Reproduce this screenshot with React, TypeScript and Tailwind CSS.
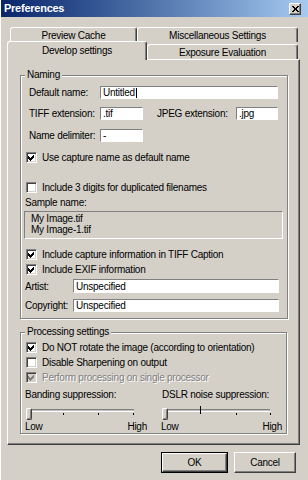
import React from "react";

const raised =
  "border border-t-white border-l-white border-r-[#404040] border-b-[#404040] shadow-[inset_-1px_-1px_0_#808080]";

function Check({ checked, disabled }: { checked?: boolean; disabled?: boolean }) {
  return (
    <span
      className={`w-[11px] h-[11px] shrink-0 flex items-center justify-center border border-t-[#808080] border-l-[#808080] border-b-white border-r-white shadow-[inset_1px_1px_0_#404040,inset_-1px_-1px_0_#d4d0c8] ${
        disabled ? "bg-[#d4d0c8]" : "bg-white"
      }`}
    >
      {checked && (
        <svg width="7" height="7" viewBox="0 0 7 7" shapeRendering="crispEdges">
          <path d="M0 2 L2 4 L6 0 L6 3 L2 7 L0 5 Z" fill={disabled ? "#808080" : "#000"} />
        </svg>
      )}
    </span>
  );
}

function CheckRow({
  label,
  checked,
  disabled,
  className = "",
}: {
  label: string;
  checked?: boolean;
  disabled?: boolean;
  className?: string;
}) {
  return (
    <div className={`flex items-center h-[11px] pl-[1px] ${className}`}>
      <Check checked={checked} disabled={disabled} />
      <span
        className={`ml-[5px] leading-[11px] whitespace-nowrap ${
          disabled ? "text-[#808080] [text-shadow:1px_1px_0_#fff]" : ""
        }`}
      >
        {label}
      </span>
    </div>
  );
}

function Input({
  value,
  className = "",
  caret,
}: {
  value: string;
  className?: string;
  caret?: boolean;
}) {
  return (
    <div
      className={`bg-white border border-t-[#808080] border-l-[#808080] border-b-white border-r-white flex items-center pl-[2px] leading-[11px] whitespace-nowrap ${className}`}
    >
      {value}
      {caret && <span className="inline-block w-[1px] h-[10px] bg-black ml-[1px]" />}
    </div>
  );
}

function Slider({ ticks, tall }: { ticks: number[]; tall?: number }) {
  return (
    <div className="relative h-[20px] w-[122px]">
      <div className="absolute left-[2px] top-[8px] w-[107px] h-[3px] border-t border-[#808080] border-b border-b-white bg-[#c0c0c0]" />
      {ticks.map((t) => (
        <div key={t} className="absolute top-[12px] w-[1px] h-[2px] bg-black" style={{ left: t }} />
      ))}
      {tall !== undefined && (
        <div className="absolute top-[5px] w-[1px] h-[8px] bg-black" style={{ left: tall }} />
      )}
      <div className={`absolute left-[1px] top-[7px] w-[6px] h-[12px] rounded-[2px] bg-[#d4d0c8] ${raised}`} />
    </div>
  );
}

function Tab({
  label,
  className = "",
}: {
  label: string;
  className?: string;
}) {
  return (
    <div
      className={`flex items-center justify-center rounded-t-[3px] border-t border-l border-r border-t-white border-l-white border-r-[#404040] shadow-[inset_-1px_0_0_#808080] bg-[#d4d0c8] whitespace-nowrap ${className}`}
    >
      {label}
    </div>
  );
}

function Group({
  legend,
  children,
  className = "",
}: {
  legend: string;
  children: React.ReactNode;
  className?: string;
}) {
  return (
    <fieldset
      className={`ml-[12px] w-[267px] border border-[#808080] shadow-[inset_1px_1px_0_#fff,1px_1px_0_#fff] px-[4px] ${className}`}
    >
      <legend className="px-[2px] leading-[12px] bg-[#d4d0c8]">{legend}</legend>
      {children}
    </fieldset>
  );
}

export default function App() {
  return (
    <div className="w-[308px] h-[480px] bg-[#d4d0c8] overflow-hidden text-[10px] tracking-[-0.25px] text-black font-['Liberation_Sans',Arial,sans-serif] border-l border-l-white">
      {/* Title bar */}
      <div className="h-[17px] flex items-center justify-between bg-linear-to-r from-[#0a246a] to-[#a6caf0] pl-[3px] pr-[7px]">
        <span className="text-white font-bold text-[11px] leading-[13px]">Preferences</span>
        <div className={`w-[12px] h-[12px] mt-[1px] bg-[#d4d0c8] flex items-center justify-center ${raised}`}>
          <svg width="7" height="6" viewBox="0 0 7 6" shapeRendering="crispEdges">
            <path d="M0 0 L2 0 L3.5 2 L5 0 L7 0 L4.5 3 L7 6 L5 6 L3.5 4 L2 6 L0 6 L2.5 3 Z" fill="#000" />
          </svg>
        </div>
      </div>

      <div className="pl-[6px]">
        {/* Tab rows */}
        <div className="flex ml-[3px] mt-[10px]">
          <Tab label="Preview Cache" className="w-[127px] h-[15px]" />
          <Tab label="Miscellaneous Settings" className="w-[161px] h-[15px]" />
        </div>
        <div className="flex items-start -mt-[1px]">
          <Tab label="Develop settings" className="relative z-10 w-[140px] h-[19px] -mb-[1px] pb-[1px] border-r-[#404040]" />
          <Tab label="Exposure Evaluation" className="w-[151px] h-[15px] mt-[3px]" />
        </div>

        {/* Panel */}
        <div className="w-[293px] h-[386px] border border-t-white border-l-white border-r-[#404040] border-b-[#404040] shadow-[inset_-1px_-1px_0_#808080] pt-[9px]">
          <Group legend="Naming" className="pb-[6px]">
            <div className="mt-[5px] flex items-center h-[13px]">
              <span className="pl-[4px] w-[75px]">Default name:</span>
              <Input value="Untitled" caret className="w-[178px] h-[13px]" />
            </div>
            <div className="mt-[8px] flex items-center h-[13px]">
              <span className="pl-[4px] w-[75px]">TIFF extension:</span>
              <Input value=".tif" className="w-[43px] h-[13px]" />
              <span className="ml-[14px] w-[79px]">JPEG extension:</span>
              <Input value=".jpg" className="w-[42px] h-[13px]" />
            </div>
            <div className="mt-[9px] flex items-center h-[13px]">
              <span className="pl-[4px] w-[75px]">Name delimiter:</span>
              <Input value="-" className="w-[43px] h-[13px]" />
            </div>
            <CheckRow className="mt-[10px]" checked label="Use capture name as default name" />
            <CheckRow className="mt-[19px]" label="Include 3 digits for duplicated filenames" />
            <div className="mt-[4px] h-[12px] leading-[12px]">Sample name:</div>
            <div className="mt-[2px] -ml-[1px] w-[259px] h-[28px] border border-t-[#808080] border-l-[#808080] border-b-white border-r-white pl-[6px] pt-[1px] leading-[11px]">
              <div>My Image.tif</div>
              <div>My Image-1.tif</div>
            </div>
            <CheckRow className="mt-[10px]" checked label="Include capture information in TIFF Caption" />
            <CheckRow className="mt-[4px]" checked label="Include EXIF information" />
            <div className="mt-[4px] flex items-center h-[14px]">
              <span className="w-[48px]">Artist:</span>
              <Input value="Unspecified" className="w-[206px] h-[14px]" />
            </div>
            <div className="mt-[6px] flex items-center h-[13px]">
              <span className="w-[48px]">Copyright:</span>
              <Input value="Unspecified" className="w-[206px] h-[13px]" />
            </div>
          </Group>

          <Group legend="Processing settings" className="mt-[7px]">
            <CheckRow className="mt-[4px]" checked label="Do NOT rotate the image (according to orientation)" />
            <CheckRow className="mt-[4px]" label="Disable Sharpening on output" />
            <CheckRow className="mt-[4px]" checked disabled label="Perform processing on single processor" />
            <div className="mt-[6px] grid grid-cols-[136px_121px]">
              <div>
                <div className="h-[12px] leading-[12px]">Banding suppression:</div>
                <Slider ticks={[38, 73, 108]} />
                <div className="h-[12px] leading-[12px] w-[122px] flex justify-between">
                  <span>Low</span>
                  <span>High</span>
                </div>
              </div>
              <div>
                <div className="h-[12px] leading-[12px] pl-[1px]">DSLR noise suppression:</div>
                <Slider ticks={[75, 109]} tall={39} />
                <div className="h-[12px] leading-[12px] w-[121px] flex justify-between">
                  <span>Low</span>
                  <span>High</span>
                </div>
              </div>
            </div>
          </Group>
        </div>
      </div>

      {/* Buttons */}
      <div className="flex justify-end gap-[6px] mt-[7px] pr-[12px]">
        <div className="w-[67px] h-[21px] border border-black">
          <div className={`w-full h-full flex items-center justify-center bg-[#d4d0c8] ${raised}`}>OK</div>
        </div>
        <div className={`w-[62px] h-[21px] flex items-center justify-center bg-[#d4d0c8] ${raised}`}>Cancel</div>
      </div>
    </div>
  );
}
